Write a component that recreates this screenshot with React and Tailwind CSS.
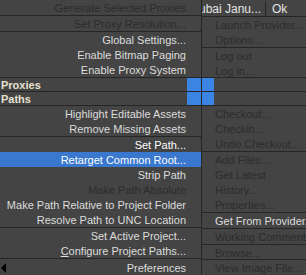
const ON = 'text-[#dcdcdc]';
const OFF = 'text-[#2c2c2c]';

function Item({ label, tone = ON, align = 'right', active = false, h = 'h-[15px]', children }) {
  return (
    <div
      className={`${h} flex items-center shrink-0 whitespace-nowrap pt-[2px] ${
        align === 'right' ? 'justify-end pr-[15px]' : 'justify-start pl-[13px]'
      } ${active ? 'bg-[#3a78d0] text-white' : tone}`}
    >
      {children || label}
    </div>
  );
}

function Sep() {
  return <div className="h-px shrink-0 bg-[#262626]" />;
}

function BandRow({ label }) {
  return (
    <div className="h-[13px] flex">
      <div className="w-[187px] flex items-center pt-px font-semibold text-[#e6e2cf] pl-px">{label}</div>
      <div className="w-[14px] bg-[#3b84e4]" />
      <div className="w-px bg-[#262626]" />
      <div className="w-[12px] bg-[#3b84e4]" />
      <div className="flex-1" />
    </div>
  );
}

export default function App() {
  return (
    <div className="w-[306px] h-[275px] overflow-hidden bg-[#444444] font-['Liberation_Sans',sans-serif] text-[11px] leading-none select-none">
      {/* top band */}
      <div className="flex h-[77px]">
        <div className="w-[201px] flex flex-col">
          <Item label="Generate Selected Proxies" tone={OFF} />
          <Sep />
          <Item label="Set Proxy Resolution..." tone={OFF} />
          <Sep />
          <Item label="Global Settings..." />
          <Item label="Enable Bitmap Paging" />
          <Item label="Enable Proxy System" />
        </div>
        <div className="w-px bg-[#262626]" />
        <div className="flex-1 flex flex-col overflow-hidden">
          <div className="h-[16px] flex items-center pt-px text-[12px] text-[#e4e4e4]">
            <div className="w-[63px] overflow-hidden whitespace-nowrap">
              <span className="ml-[-3px]">ubai Janu...</span>
            </div>
            <div className="w-px h-full bg-[#262626]" />
            <div className="pl-[6px]">Ok</div>
          </div>
          <Sep />
          <Item label="Launch Provider..." tone={OFF} align="left" />
          <Item label="Options..." tone={OFF} align="left" />
          <Sep />
          <Item label="Log out" tone={OFF} align="left" />
          <Item label="Log in..." tone={OFF} align="left" h="h-[14px]" />
        </div>
      </div>

      {/* proxies / paths rows */}
      <Sep />
      <BandRow label="Proxies" />
      <Sep />
      <BandRow label="Paths" />
      <Sep />

      {/* bottom band */}
      <div className="flex h-[169px]">
        <div className="w-[201px] flex flex-col">
          <Item label="Highlight Editable Assets" />
          <Item label="Remove Missing Assets" />
          <Sep />
          <Item label="Set Path..." tone="text-white" />
          <Item label="Retarget Common Root..." active />
          <Item label="Strip Path" />
          <Item label="Make Path Absolute" tone={OFF} />
          <Item label="Make Path Relative to Project Folder" />
          <Item label="Resolve Path to UNC Location" />
          <Sep />
          <Item label="Set Active Project..." />
          <Item>
            <span>
              <span className="underline">C</span>onfigure Project Paths...
            </span>
          </Item>
          <Sep />
          <div className="h-[16px] flex items-center justify-between pt-[2px] pr-[15px] text-[#dcdcdc]">
            <svg width="6" height="10" viewBox="0 0 6 10" className="ml-px">
              <path d="M5 0 L0 5 L5 10 Z" fill="#000" />
            </svg>
            <span>Preferences</span>
          </div>
        </div>
        <div className="w-px bg-[#262626]" />
        <div className="flex-1 flex flex-col overflow-hidden">
          <Item label="Checkout..." tone={OFF} align="left" />
          <Item label="Checkin..." tone={OFF} align="left" />
          <Item label="Undo Checkout..." tone={OFF} align="left" />
          <Sep />
          <Item label="Add Files..." tone={OFF} align="left" />
          <Item label="Get Latest" tone={OFF} align="left" />
          <Item label="History..." tone={OFF} align="left" />
          <Item label="Properties..." tone={OFF} align="left" />
          <Sep />
          <Item label="Get From Provider..." align="left" />
          <Sep />
          <Item label="Working Comment..." tone={OFF} align="left" />
          <Sep />
          <Item label="Browse..." tone={OFF} align="left" h="h-[14px]" />
          <Sep />
          <Item label="View Image File..." tone={OFF} align="left" />
        </div>
      </div>
    </div>
  );
}
